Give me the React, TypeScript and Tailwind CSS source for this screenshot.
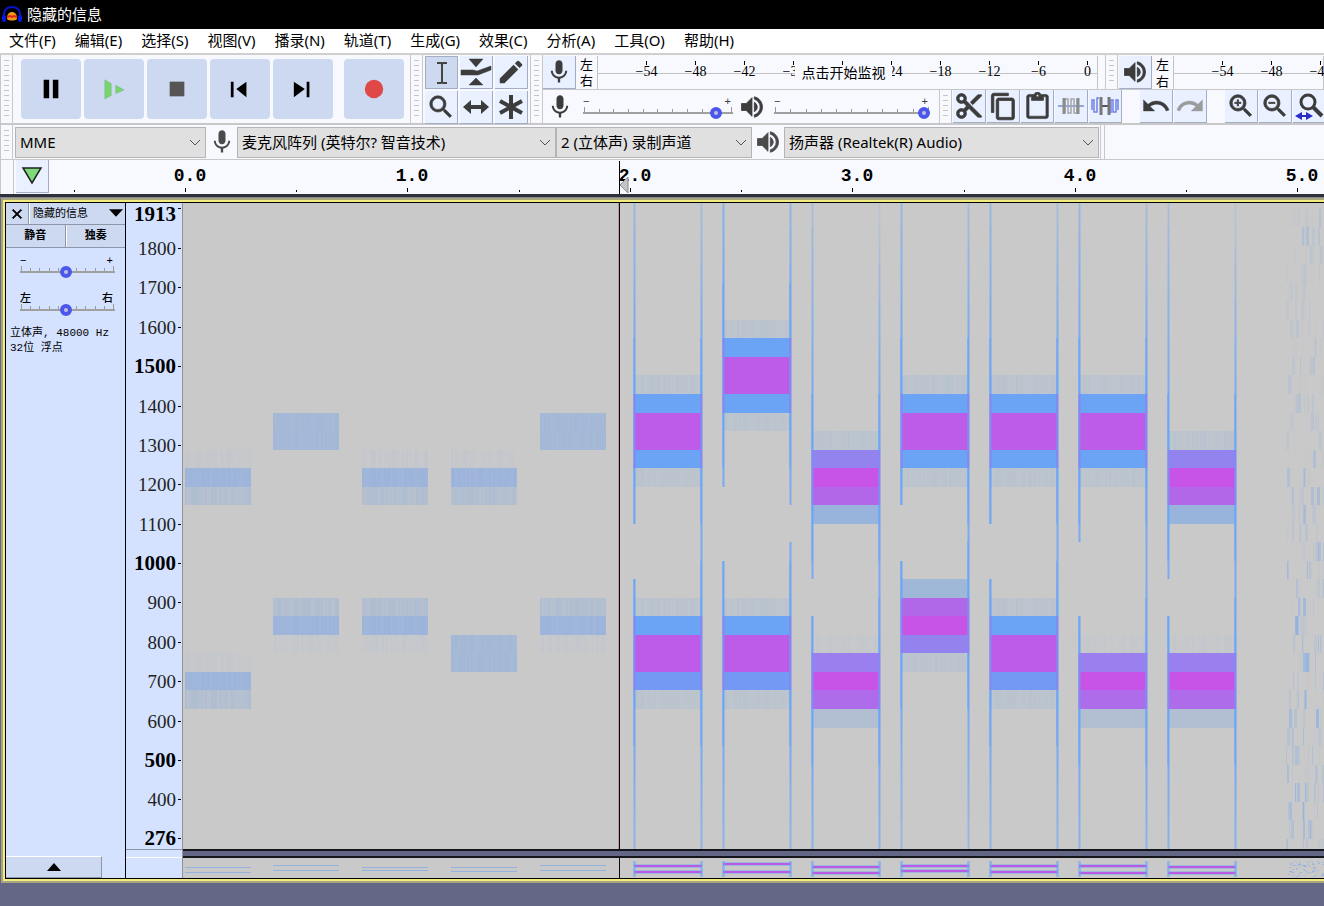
import React, { useState } from 'react';
import {
  MdMic, MdVolumeUp, MdContentCut, MdContentCopy, MdContentPaste,
  MdUndo, MdRedo, MdSearch, MdZoomIn, MdZoomOut, MdEdit, MdClose,
} from 'react-icons/md';

const menus = ['文件(F)', '编辑(E)', '选择(S)', '视图(V)', '播录(N)', '轨道(T)', '生成(G)', '效果(C)', '分析(A)', '工具(O)', '帮助(H)'];

const SECOND = 222.4;
const BIN = 18.53;

// thickens an icon but leaves its empty bounding path alone
const heavy = 'stroke-current [&>path:first-child]:stroke-none';

// top of a frequency bin inside the spectrogram, bin 0 sits just above 1400 Hz
const binY = (k: number) => Math.round(191 + BIN * k);
const freqY = (f: number) => 45 + (1800 - f) * 0.3938;

const rand = (seed: number) => {
  const v = Math.sin(seed * 127.1 + 11.7) * 43758.5453;
  return v - Math.floor(v);
};

type Band = { bin: number; colors: string[] };
type Burst = { x: number; w: number; bands: Band[]; strip: number[]; gap?: number[]; rightGap?: number[] };

const FAINT = '#b9c3cf';
const TRACE = '#c3c7cd';
const HALF = '#aebdd2';
const SOFT = '#9cb4dc';
const FLAT = '#a3b8d8';

const even = (bin: number, tail = '#6ba3f5'): Band => ({ bin, colors: [FAINT, '#6ba3f5', '#bd5ce8', '#bd5ce8', tail, FAINT] });
const highOdd: Band = { bin: 2, colors: [FAINT, '#9283ee', '#c754e6', '#b167e8', '#98b4dc'] };
const lowOdd: Band = { bin: 13, colors: [TRACE, '#9a80ee', '#c754e6', '#ae6bea', '#b2bfd2'] };
const lowEven = even(11, '#7499f4');
const lowFlip: Band = { bin: 10, colors: ['#9fb8d8', '#b168e8', '#c754e6', '#9482ee', FAINT] };

const softHigh: Band = { bin: 3, colors: [TRACE, SOFT, HALF] };
const softHighFlat: Band = { bin: 1, colors: [FLAT, FLAT] };
const softLow: Band = { bin: 11, colors: [HALF, SOFT, TRACE] };

const bursts: Burst[] = [
  { x: 2, w: 66, bands: [softHigh, { bin: 14, colors: [TRACE, SOFT, HALF] }], strip: [9, 14] },
  { x: 90, w: 66, bands: [softHighFlat, softLow], strip: [7, 12] },
  { x: 179, w: 66, bands: [softHigh, softLow], strip: [9, 12] },
  { x: 268, w: 66, bands: [softHigh, { bin: 13, colors: [FLAT, FLAT] }], strip: [9, 13] },
  { x: 357, w: 66, bands: [softHighFlat, softLow], strip: [7, 12] },
  { x: 451, w: 68, bands: [even(-1), lowEven], strip: [8, 14], gap: [7, 10] },
  { x: 540, w: 68, bands: [even(-4), lowEven], strip: [6, 14], gap: [5, 9], rightGap: [6, 8] },
  { x: 629, w: 68, bands: [highOdd, lowOdd], strip: [9, 15], gap: [10, 12] },
  { x: 718, w: 68, bands: [even(-1), lowFlip], strip: [8, 13], gap: [6, 9] },
  { x: 807, w: 68, bands: [even(-1), lowEven], strip: [8, 14], gap: [7, 10] },
  { x: 896, w: 68, bands: [even(-1), lowOdd], strip: [8, 15], gap: [8, 12] },
  { x: 985, w: 68, bands: [highOdd, lowOdd], strip: [9, 15], gap: [10, 12] },
];

function BandShape({ burst, band }: { burst: Burst; band: Band }) {
  return (
    <g>
      {band.colors.map((color, i) => {
        const y = binY(band.bin + i);
        const h = binY(band.bin + i + 1) - y;
        const grain = color === TRACE ? 0.8 : color === FAINT || color === HALF ? 0.35 : [SOFT, FLAT].includes(color) ? 0.12 : 0;
        return (
          <g key={i}>
            <rect x={burst.x} y={y} width={burst.w} height={h} fill={color} />
            {grain > 0 && Array.from({ length: Math.floor(burst.w / 2) }, (_, n) => (
              <rect key={n} x={burst.x + n * 2} y={y} width={2} height={h} fill="#c9c9c9" opacity={rand(burst.x + n * 3 + i * 71) * grain} />
            ))}
          </g>
        );
      })}
    </g>
  );
}

function Edge({ burst, side }: { burst: Burst; side: 'left' | 'right' }) {
  const [high, low] = burst.bands;
  const gap = side === 'left' ? burst.gap : burst.rightGap;
  const x = side === 'left' ? burst.x - 1 : burst.x + burst.w - 2;
  const cells = [];
  for (let k = -11; k < 25; k++) {
    if (gap && k >= gap[0] && k < gap[1]) continue;
    const away = (b: Band) => Math.max(b.bin - k, k - (b.bin + b.colors.length - 1), 0);
    const distance = Math.min(away(high), away(low));
    const fade = k < high.bin && side === 'right' ? 0.065 : 0.05;
    const inner = (b: Band) => k > b.bin && k < b.bin + b.colors.length - 1;
    const hot = inner(high) || inner(low);
    const opacity = Math.max(0.85 - distance * fade, 0.1);
    const y = binY(k);
    const h = binY(k + 1) - y;
    const fill = hot ? '#8289f4' : '#69a5f8';
    cells.push(
      <g key={k} fill={fill}>
        <rect x={x} y={y} width={3} height={h} opacity={opacity * 0.6} />
        <rect x={x + 1} y={y} width={1} height={h} opacity={opacity} />
        {distance < 3 && <rect x={x} y={y} width={2} height={h} opacity={0.5} />}
      </g>
    );
  }
  return <g>{cells}</g>;
}

function Noise() {
  const cells = [];
  for (let k = -10; k < 25; k++) {
    for (let n = 0; n < 8; n++) {
      const seed = k * 13.37 + n * 5.31;
      cells.push(
        <rect
          key={`${k}-${n}`}
          x={1103 + Math.floor(rand(seed) * 38)}
          y={binY(k)}
          width={1 + Math.floor(rand(seed + 2) * 3)}
          height={binY(k + 1) - binY(k)}
          fill="#85aee6"
          opacity={rand(seed + 4) * rand(seed + 6) * (0.4 + Math.max(k, 0) * 0.025)}
        />
      );
    }
  }
  return <g>{cells}</g>;
}

function Spectrogram() {
  return (
    <svg className="block h-[646px] w-full bg-[#c9c9c9]" role="img" aria-label="频谱图">
      {bursts.map((b) => (
        <g key={b.x}>
          {b.bands.map((band) => <BandShape key={band.bin} burst={b} band={band} />)}
          {b.gap && <Edge burst={b} side="left" />}
          {b.gap && <Edge burst={b} side="right" />}
        </g>
      ))}
      <Noise />
      <rect x="435" y="0" width="1" height="646" fill="#b49c9c" />
      <rect x="436" y="0" width="1" height="646" fill="#1a0505" />
    </svg>
  );
}

function StripSpectrogram() {
  return (
    <svg className="block h-[20px] w-full bg-[#c9c9c9]" aria-hidden="true">
      {bursts.map((b) => (
        <g key={b.x}>
          {b.strip.map((y) => b.gap ? (
            <g key={y}>
              <rect x={b.x} y={y - 2} width={b.w} height="4" fill="#6ba3f5" opacity=".45" />
              <rect x={b.x} y={y - 1} width={b.w} height="2" fill="#b95be6" />
            </g>
          ) : (
            <rect key={y} x={b.x} y={y} width={b.w} height="1" fill="#94b2df" />
          ))}
          {b.gap && [b.x - 1, b.x + b.w - 2].map((x) => <rect key={x} x={x} y="3" width="3" height="16" fill="#69a5f8" opacity=".55" />)}
        </g>
      ))}
      {Array.from({ length: 70 }, (_, n) => (
        <rect key={n} x={1104 + Math.floor(rand(n) * 36)} y={3 + Math.floor(rand(n + 90) * 16)} width="2" height="1" fill="#85aee6" opacity=".55" />
      ))}
      <rect x="436" y="0" width="1" height="20" fill="#1a0505" />
    </svg>
  );
}

function FrequencyRuler() {
  const steps = [1800, 1700, 1600, 1500, 1400, 1300, 1200, 1100, 1000, 900, 800, 700, 600, 500, 400];
  return (
    <svg className="block h-[646px] w-full font-['Liberation_Serif',serif]" role="img" aria-label="频率标尺">
      <text x="50" y="18" textAnchor="end" className="text-[21px] font-bold">1913</text>
      <rect x="52" y="5" width="3" height="1" />
      {steps.map((f) => (
        <g key={f}>
          <text x="50" y={Math.round(freqY(f)) + 7} textAnchor="end" className={f % 500 === 0 ? 'text-[21px] font-bold' : 'fill-[#222] text-[19px]'}>{f}</text>
          <rect x="52" y={Math.round(freqY(f))} width="3" height="1" />
        </g>
      ))}
      <text x="50" y="642" textAnchor="end" className="text-[21px] font-bold">276</text>
      <rect x="52" y="635" width="3" height="1" />
    </svg>
  );
}

function TimeRuler() {
  return (
    <svg className="h-[34px] min-w-0 flex-1 font-['Liberation_Mono',monospace]" role="img" aria-label="时间标尺">
      {[0, 1, 2, 3, 4, 5].map((s) => {
        const x = Math.round(136 + s * SECOND);
        return (
          <g key={s}>
            <text x={x + 5} y="21" textAnchor="middle" className="text-[18px] font-bold">{s}.0</text>
            <rect x={x} y="28" width="1" height="4" />
            <rect x={Math.round(x - SECOND / 2)} y="30" width="1" height="2" />
          </g>
        );
      })}
      <path d="M579 17v16l-8-8z" fill="#c4c4c4" stroke="#8b8b8b" />
      <rect x="570" y="1" width="1" height="33" />
    </svg>
  );
}

function Grip({ className = '' }: { className?: string }) {
  return (
    <div className={`flex w-[13px] shrink-0 justify-center border-x border-[#c8c8c8] py-[5px] ${className}`}>
      <div className="w-[5px] bg-[repeating-linear-gradient(#c6c6c6_0_1px,transparent_1px_5px)]" />
    </div>
  );
}

function ToolButton({ label, active, children }: { label: string; active?: boolean; children: React.ReactNode }) {
  return (
    <button
      aria-label={label}
      className={`flex h-[33px] w-[33px] shrink-0 items-center justify-center border-r border-b border-[#a3aec6] text-[#3c3c3c] ${active ? 'border-t border-l bg-[#cdd9ef]' : 'bg-[#e9f0ff]'}`}
    >
      {children}
    </button>
  );
}

function TransportButton({ label, children }: { label: string; children: React.ReactNode }) {
  return (
    <button aria-label={label} className="flex h-[60px] w-[60px] items-center justify-center rounded-[4px] bg-[#cdd9f0]">
      <svg width="22" height="22" viewBox="0 0 24 24">{children}</svg>
    </button>
  );
}

function Slider({ label, start, end, value, ticks, className }: { label: string; start: string; end: string; value: number; ticks: number; className: string }) {
  const [level, setLevel] = useState(value);
  return (
    <div className={className}>
      <div className="flex justify-between pr-[2px] font-['Liberation_Sans','Noto_Sans_CJK_SC',sans-serif] text-[11px] leading-[12px] font-medium">
        <span>{start}</span>
        <span>{end}</span>
      </div>
      <div className="flex h-[5px] items-end justify-between px-px">
        {Array.from({ length: ticks }, (_, i) => (
          <i key={i} className={`w-px bg-[#9a9a9a] ${i === 0 || i === ticks - 1 ? 'h-[5px]' : 'h-[3px]'}`} />
        ))}
      </div>
      <input
        type="range"
        aria-label={label}
        value={level}
        onChange={(e) => setLevel(Number(e.target.value))}
        className="-mt-[5px] block h-[12px] w-full appearance-none bg-[linear-gradient(#a0a0a0,#a0a0a0)] bg-[length:100%_2px] bg-center bg-no-repeat [&::-webkit-slider-thumb]:h-[12px] [&::-webkit-slider-thumb]:w-[12px] [&::-webkit-slider-thumb]:appearance-none [&::-webkit-slider-thumb]:rounded-full [&::-webkit-slider-thumb]:border-4 [&::-webkit-slider-thumb]:border-[#4b57ea] [&::-webkit-slider-thumb]:bg-[#c3c0dc]"
      />
    </div>
  );
}

// an empty label keeps its tick, the monitoring prompt covers that spot
const recordMarks = ['−54', '−48', '−42', '−36', '', '−24', '−18', '−12', '−6', '0'];
const playMarks = ['−54', '−48', '−42'];

function MeterScale({ marks, prompt, className }: { marks: string[]; prompt?: string; className: string }) {
  return (
    <div className={`relative h-[33px] border-x border-[#c3c3c3] ${className}`}>
      <div className="absolute inset-x-0 top-[17px] h-px bg-[#c3c3c3]" />
      <div className="relative flex pl-[24px]">
        {marks.map((mark, i) => (
          <div key={i} className="flex w-[49px] shrink-0 flex-col items-center pt-[5px]">
            <i className="h-[4px] w-px bg-black" />
            <span className="font-['Liberation_Serif',serif] text-[14px] leading-[14px]">{mark}</span>
          </div>
        ))}
      </div>
      {prompt && (
        <button className="absolute top-[9px] left-[197px] h-[17px] w-[97px] bg-[#f8f9ff] text-[14px] leading-[16px]">{prompt}</button>
      )}
    </div>
  );
}

function Channels() {
  return (
    <div className="flex shrink-0 flex-col justify-between text-[13px] leading-[16px]">
      <span>左</span>
      <span>右</span>
    </div>
  );
}

function DeviceSelect({ label, value, className }: { label: string; value: string; className: string }) {
  return (
    <div className={`relative shrink-0 ${className}`}>
      <select aria-label={label} className="h-[31px] w-full appearance-none border border-[#b4b4b4] bg-[#e0e0e0] pl-[4px] text-[15px]">
        <option>{value}</option>
      </select>
      <svg className="pointer-events-none absolute top-[12px] right-[5px]" width="12" height="8" viewBox="0 0 12 8">
        <path d="M1 1l5 5 5-5" fill="none" stroke="#555" />
      </svg>
    </div>
  );
}

export default function App() {
  return (
    <div className="min-h-screen overflow-hidden bg-[#636685] font-['Noto_Sans','Noto_Sans_CJK_SC',sans-serif] text-black">
      {/* TITLE BAR */}
      <header className="flex h-[29px] items-center gap-[5px] bg-black pl-[2px]">
        <svg width="20" height="20" viewBox="0 0 20 20">
          <path d="M5 14c0-5 2-7 5-7s5 2 5 7c-2 2-8 2-10 0z" fill="#f09a18" />
          <path d="M5 12l3-1 2 1 2-1 3 1" stroke="#e5261c" strokeWidth="2" fill="none" />
          <path d="M2 13C1 5 5 2 10 2s9 3 8 11" fill="none" stroke="#0712c9" strokeWidth="2" />
          <rect x="0" y="10" width="4" height="7" rx="2" fill="#0a17e6" />
          <rect x="16" y="10" width="4" height="7" rx="2" fill="#0a17e6" />
        </svg>
        <h1 className="pb-[2px] text-[15px] leading-[24px] text-white">隐藏的信息</h1>
      </header>

      {/* MENU */}
      <nav className="flex h-[26px] items-start gap-[19px] border-b-2 border-[#cfcfcf] bg-white pl-[9px]">
        {menus.map((m) => <button key={m} className="shrink-0 text-[15px] leading-[23px]">{m}</button>)}
      </nav>

      {/* TOOLBARS */}
      <div className="flex h-[70px] border-b-2 border-[#c8c8c8] bg-[#f8f9ff]">
        <Grip />
        <div className="flex shrink-0 items-center gap-[3px] pr-[6px] pl-[8px]">
          <TransportButton label="暂停"><path d="M4 2h6v20H4zM14 2h6v20h-6z" /></TransportButton>
          <TransportButton label="播放"><path d="M2 2l7 4v13l-7 4zM14 8l9 5-9 4z" fill="#75d66d" stroke="#83b587" strokeWidth=".6" /></TransportButton>
          <TransportButton label="停止"><path d="M4 4h16v16H4z" fill="#555" /></TransportButton>
          <TransportButton label="跳至开头"><path d="M2 4h3v17H2zM19 4v17L8 12z" /></TransportButton>
          <TransportButton label="跳至结尾"><path d="M16 4h3v17h-3zM2 4v17l12-9z" /></TransportButton>
          <div className="w-[5px]" />
          <TransportButton label="录制"><circle cx="12" cy="12" r="10" fill="#e04848" /></TransportButton>
        </div>
        <Grip />
        <div className="grid shrink-0 grid-cols-3 content-start gap-[2px] px-[2px] pt-px">
          <ToolButton label="选择工具" active>
            <svg width="24" height="26" viewBox="0 0 24 26"><path d="M7 3h4l1 1 1-1h4M7 23h4l1-1 1 1h4M12 3v20" fill="none" stroke="#444" strokeWidth="2" /></svg>
          </ToolButton>
          <ToolButton label="包络工具">
            <svg width="32" height="28" viewBox="0 0 32 28"><path d="M9 1h14l-7 8zM9 27h14l-7-7zM1 12h12l4 1 14-5v4l-13 5H1z" fill="#3c3c3c" stroke="#3c3c3c" strokeWidth=".5" /></svg>
          </ToolButton>
          <ToolButton label="绘制工具"><MdEdit size={30} /></ToolButton>
          <ToolButton label="缩放工具"><MdSearch size={30} strokeWidth={0.5} className={heavy} /></ToolButton>
          <ToolButton label="时间移动工具">
            <svg width="28" height="20" viewBox="0 0 28 20"><path d="M1 10l8-7v5h10V3l8 7-8 7v-5H9v5z" fill="#3c3c3c" /></svg>
          </ToolButton>
          <ToolButton label="多功能工具">
            <svg width="28" height="28" viewBox="0 0 28 28"><path d="M14 2v24M3 8l22 12M25 8L3 20" stroke="#3c3c3c" strokeWidth="4" /></svg>
          </ToolButton>
        </div>
        <Grip />
        <div className="min-w-0 flex-1">
          <div className="flex h-[35px] items-center gap-[4px] border-b border-[#c8c8c8]">
            <ToolButton label="录制电平"><MdMic size={28} /></ToolButton>
            <Channels />
            <MeterScale marks={recordMarks} prompt="点击开始监视" className="w-[501px] shrink-0 overflow-hidden" />
            <Grip className="ml-[3px] h-full" />
            <div className="-ml-[3px] flex min-w-0 flex-1 gap-[4px]">
              <ToolButton label="播放电平"><MdVolumeUp size={28} strokeWidth={0.7} className={heavy} /></ToolButton>
              <Channels />
              <MeterScale marks={playMarks} className="min-w-0 flex-1" />
            </div>
          </div>
          <div className="flex h-[33px] items-center">
            <div className="flex w-[390px] shrink-0 items-center pl-[3px] text-[#3c3c3c]">
              <MdMic size={28} />
              <Slider label="录制音量" start="−" end="+" value={92} ticks={11} className="ml-[9px] w-[150px]" />
              <MdVolumeUp size={28} strokeWidth={0.7} className={`ml-[5px] ${heavy}`} />
              <Slider label="播放音量" start="−" end="+" value={100} ticks={11} className="ml-[8px] w-[156px]" />
            </div>
            <Grip className="ml-[6px] h-full" />
            <div className="ml-px flex shrink-0 gap-[1px]">
              <ToolButton label="剪切"><MdContentCut size={30} strokeWidth={0.5} className={heavy} /></ToolButton>
              <ToolButton label="复制"><MdContentCopy size={29} strokeWidth={0.7} className={heavy} /></ToolButton>
              <ToolButton label="粘贴"><MdContentPaste size={29} strokeWidth={0.5} className={heavy} /></ToolButton>
              <ToolButton label="修剪音频">
                <svg width="28" height="24" viewBox="0 0 28 24" fill="none"><path d="M1 12h26" stroke="#96a6d8" strokeWidth="2" /><path d="M8 19V5h3v14h3V5h3v14h3V5" stroke="#a5a5ab" strokeWidth="1.5" /><path d="M7 4v16M21 4v16" stroke="#8c8c8c" strokeWidth="3" /></svg>
              </ToolButton>
              <ToolButton label="静音音频">
                <svg width="28" height="24" viewBox="0 0 28 24" fill="none"><path d="M1 16V6h2v12h3V4h2M20 19V6h2v12h3V6h2v10" stroke="#6f82e8" strokeWidth="1.5" /><path d="M9 12h10" stroke="#555" strokeWidth="2" /><path d="M10 3v18M18 3v18" stroke="#777" strokeWidth="3" /></svg>
              </ToolButton>
            </div>
            <div className="ml-[18px] flex shrink-0 gap-[1px]">
              <ToolButton label="撤销"><MdUndo size={30} strokeWidth={0.3} className={heavy} /></ToolButton>
              <ToolButton label="重做"><MdRedo size={30} strokeWidth={0.3} className={`text-[#9b9b9b] ${heavy}`} /></ToolButton>
            </div>
            <div className="ml-[18px] flex shrink-0 gap-[1px]">
              <ToolButton label="放大"><MdZoomIn size={30} strokeWidth={0.6} className={heavy} /></ToolButton>
              <ToolButton label="缩小"><MdZoomOut size={30} strokeWidth={0.6} className={heavy} /></ToolButton>
              <ToolButton label="适应选区">
                <svg width="30" height="28" viewBox="0 0 30 28" fill="none"><circle cx="14" cy="10" r="7" stroke="#3c3c3c" strokeWidth="3" /><path d="M19 15l9 9" stroke="#3c3c3c" strokeWidth="4" /><path d="M3 24h14" stroke="#2b2bc8" strokeWidth="2" /><path d="M1 24l7-4v8zM19 24l-7-4v8z" fill="#2b2bc8" /></svg>
              </ToolButton>
            </div>
          </div>
        </div>
      </div>

      {/* DEVICES */}
      <div className="flex h-[35px] items-center border-b border-[#c8c8c8] bg-[#f8f9ff]">
        <Grip className="h-full" />
        <DeviceSelect label="音频主机" value="MME" className="ml-[2px] w-[191px]" />
        <MdMic size={28} className="mr-px ml-[2px] shrink-0 text-[#4a4a4a]" />
        <DeviceSelect label="录制设备" value="麦克风阵列 (英特尔? 智音技术)" className="w-[319px]" />
        <DeviceSelect label="录制声道" value="2 (立体声) 录制声道" className="w-[196px]" />
        <MdVolumeUp size={28} strokeWidth={0.7} className={`mx-[2px] shrink-0 text-[#4a4a4a] ${heavy}`} />
        <DeviceSelect label="播放设备" value="扬声器 (Realtek(R) Audio)" className="w-[315px]" />
        <div className="ml-px h-full w-[5px] border-x border-[#c8c8c8]" />
      </div>

      {/* TIMELINE */}
      <div className="flex h-[34px] bg-[#f8f9ff]">
        <div className="w-[14px] shrink-0 border-x border-[#c8c8c8]" />
        <div className="w-[35px] shrink-0 pl-[2px]">
          <ToolButton label="固定播放头">
            <svg width="22" height="20" viewBox="0 0 22 20"><path d="M2 2h18l-9 15z" fill="#7ddc78" stroke="#222" strokeWidth="1.5" /></svg>
          </ToolButton>
        </div>
        <TimeRuler />
      </div>
      <div className="h-[4px] border-b border-[#85868e] bg-[#2e303a]" />

      {/* TRACK */}
      <main className="ml-px border-y-2 border-l-2 border-[#a8a67e]">
        <div className="border-y-2 border-l-2 border-[#f2ec80]">
          <div className="flex border-y border-l border-black">
            <section className="flex w-[120px] shrink-0 flex-col border-r border-black bg-[#d4e2ff] font-['Liberation_Mono','Noto_Sans_CJK_SC',monospace]">
              <div className="flex h-[22px] border-b border-[#8d95a8] bg-[#cdd9f0]">
                <button aria-label="关闭轨道" className="flex w-[23px] items-center justify-center border-r border-[#8d95a8]"><MdClose size={16} strokeWidth={1} className={heavy} /></button>
                <button className="flex flex-1 items-center justify-between border-l border-white pr-[2px] pl-[3px] text-[11px] leading-[20px]">
                  隐藏的信息
                  <svg width="14" height="9" viewBox="0 0 15 9"><path d="M0 0h15L7.500 8z" /></svg>
                </button>
              </div>
              <div className="flex h-[23px] border-b border-[#8d95a8] bg-[#cdd9f0] text-[11px] leading-[23px] font-bold">
                <button className="flex-1 border-r border-[#8d95a8]">静音</button>
                <button className="flex-1 border-l border-white">独奏</button>
              </div>
              <Slider label="增益" start="−" end="+" value={48} ticks={11} className="mt-[6px] ml-[14px] w-[95px]" />
              <Slider label="声像" start="左" end="右" value={48} ticks={11} className="mt-[14px] ml-[14px] w-[95px]" />
              <p className="mt-[10px] pl-[4px] text-[11px] leading-[15px] whitespace-nowrap">立体声, 48000 Hz<br />32位 浮点</p>
              <button aria-label="折叠轨道" className="mt-auto flex h-[22px] w-[96px] items-center justify-center border-t border-r border-b border-t-white border-r-[#8d95a8] border-b-[#8d95a8] bg-[#cdd9f0]">
                <svg width="14" height="8" viewBox="0 0 14 8"><path d="M0 8h14L7 0z" /></svg>
              </button>
            </section>
            <div className="w-[57px] shrink-0 border-r border-[#8f8f94] bg-[#d4e2ff]">
              <FrequencyRuler />
              <div className="h-[9px] border-t border-b border-t-[#8d95a8] border-b-white" />
            </div>
            <div className="min-w-0 flex-1">
              <Spectrogram />
              <div className="h-[9px] border-y-2 border-[#15151c] bg-[#636685]" />
              <StripSpectrogram />
            </div>
          </div>
        </div>
      </main>
    </div>
  );
}
